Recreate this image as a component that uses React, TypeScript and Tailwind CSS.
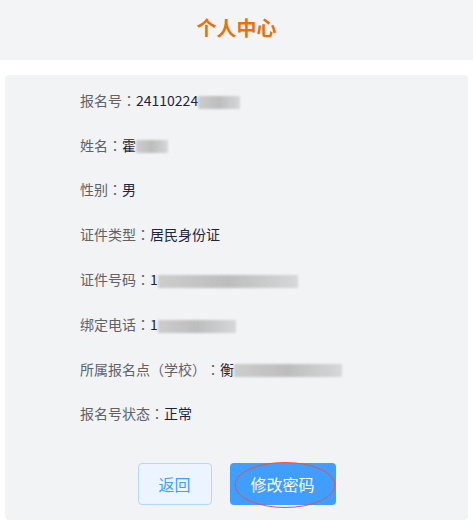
import React from 'react'

const font = { fontFamily: '"Microsoft YaHei", "Noto Sans CJK SC", "Noto Sans", sans-serif' }

function Smudge({ w }: { w: number }) {
  return (
    <span
      className="inline-block h-[13px] align-middle bg-gradient-to-r from-[#c9c9c9] via-[#b8b8b8] to-[#d3d6d6] blur-[1px] opacity-90"
      style={{ width: w }}
    />
  )
}

// centred full-width punctuation, as in the reference
function P({ c }: { c: string }) {
  return <span className="[font-family:'Noto_Sans_CJK_TC',sans-serif]">{c}</span>
}

const rows: { label: React.ReactNode; value: React.ReactNode }[] = [
  { label: <>报名号<P c="：" /></>, value: <>24110224<Smudge w={42} /></> },
  { label: <>姓名<P c="：" /></>, value: <>霍<Smudge w={32} /></> },
  { label: <>性别<P c="：" /></>, value: '男' },
  { label: <>证件类型<P c="：" /></>, value: '居民身份证' },
  { label: <>证件号码<P c="：" /></>, value: <>1<Smudge w={140} /></> },
  { label: <>绑定电话<P c="：" /></>, value: <>1<Smudge w={78} /></> },
  { label: <>所属报名点<P c="（" />学校<P c="）" /><P c="：" /></>, value: <>衡<Smudge w={108} /></> },
  { label: <>报名号状态<P c="：" /></>, value: '正常' },
]

export default function App() {
  return (
    <div className="w-[473px] h-[521px] bg-white overflow-hidden [text-spacing-trim:space-all]" style={font}>
      <div className="h-[60px] bg-[#f3f4f5] flex items-center justify-center">
        <h1 className="text-[20px] font-bold text-[#e8710c] -mt-[5px]">个人中心</h1>
      </div>

      <div className="mx-[5px] mt-[15px] h-[445px] rounded bg-[#f2f3f5] pt-[3px]">
        {rows.map((r, i) => (
          <div key={i} className="h-[44.8px] flex items-center pl-[75px] text-[14px] whitespace-nowrap">
            <span className="text-[#606266]">{r.label}</span>
            <span className="text-[#1f2340]">{r.value}</span>
          </div>
        ))}

        <div className="mt-[27px] flex justify-center gap-[18px]">
          <button className="w-[74px] h-[42px] rounded border border-[#b3d8ff] bg-[#ecf5ff] text-[#409eff] text-[16px]">
            返回
          </button>
          <div className="relative">
            <button className="w-[106px] h-[42px] rounded bg-[#409eff] text-white text-[16px]">
              修改密码
            </button>
            <svg className="absolute left-[4px] -top-[2px] pointer-events-none" width="104" height="48" viewBox="0 0 104 48">
              <ellipse cx="51" cy="24" rx="50" ry="22.5" fill="none" stroke="#e8504f" strokeWidth="1" />
            </svg>
          </div>
        </div>
      </div>
    </div>
  )
}
